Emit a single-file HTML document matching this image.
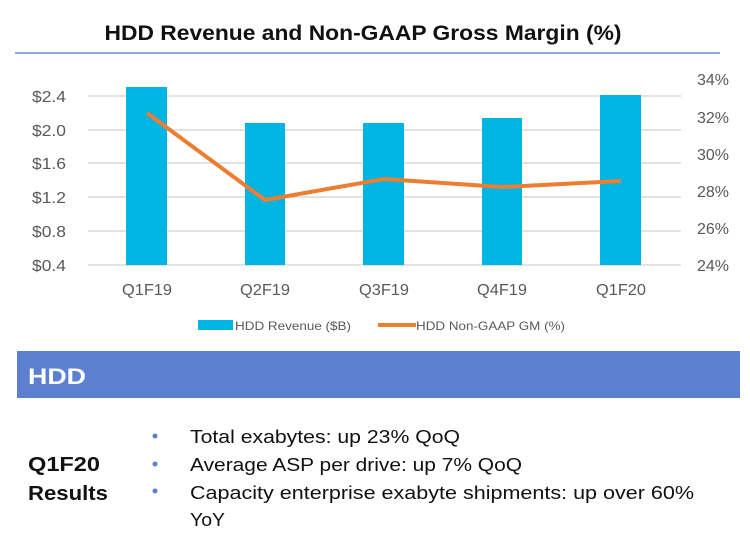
<!DOCTYPE html>
<html><head><meta charset="utf-8"><style>
html,body{margin:0;padding:0;background:#fff;}
svg{display:block;font-family:"Liberation Sans",sans-serif;}
</style></head><body>
<svg width="750" height="533" viewBox="0 0 750 533">
<text x="363" y="40" text-anchor="middle" font-size="21" font-weight="bold" fill="#111" textLength="517" lengthAdjust="spacingAndGlyphs">HDD Revenue and Non-GAAP Gross Margin (%)</text>
<rect x="15" y="52" width="705" height="2" fill="#8fa8dc"/>
<g stroke="#d9d9d9" stroke-width="1.5">
<line x1="88" y1="96" x2="681" y2="96"/><line x1="88" y1="130" x2="681" y2="130"/>
<line x1="88" y1="163" x2="681" y2="163"/><line x1="88" y1="197" x2="681" y2="197"/>
<line x1="88" y1="231" x2="681" y2="231"/><line x1="88" y1="265" x2="681" y2="265"/>
</g>
<g fill="#00b5e2">
<rect x="126" y="87" width="41" height="178"/>
<rect x="245" y="123" width="40" height="142"/>
<rect x="363" y="123" width="41" height="142"/>
<rect x="482" y="118" width="40" height="147"/>
<rect x="600" y="95" width="41" height="170"/>
</g>
<polyline points="147,113 265,200 384,179 502,187 621,181" fill="none" stroke="#ed7d31" stroke-width="4" stroke-linejoin="round"/>
<g font-size="16" fill="#595959">
<text x="32" y="102" textLength="34" lengthAdjust="spacingAndGlyphs">$2.4</text>
<text x="32" y="136" textLength="34" lengthAdjust="spacingAndGlyphs">$2.0</text>
<text x="32" y="169" textLength="34" lengthAdjust="spacingAndGlyphs">$1.6</text>
<text x="32" y="203" textLength="34" lengthAdjust="spacingAndGlyphs">$1.2</text>
<text x="32" y="237" textLength="34" lengthAdjust="spacingAndGlyphs">$0.8</text>
<text x="32" y="271" textLength="34" lengthAdjust="spacingAndGlyphs">$0.4</text>
</g>
<g font-size="16" fill="#595959">
<text x="697" y="85" textLength="32" lengthAdjust="spacingAndGlyphs">34%</text>
<text x="697" y="123" textLength="32" lengthAdjust="spacingAndGlyphs">32%</text>
<text x="697" y="160" textLength="32" lengthAdjust="spacingAndGlyphs">30%</text>
<text x="697" y="197" textLength="32" lengthAdjust="spacingAndGlyphs">28%</text>
<text x="697" y="234" textLength="32" lengthAdjust="spacingAndGlyphs">26%</text>
<text x="697" y="271" textLength="32" lengthAdjust="spacingAndGlyphs">24%</text>
</g>
<g font-size="16" fill="#595959">
<text x="122" y="295" textLength="50" lengthAdjust="spacingAndGlyphs">Q1F19</text>
<text x="240" y="295" textLength="50" lengthAdjust="spacingAndGlyphs">Q2F19</text>
<text x="359" y="295" textLength="50" lengthAdjust="spacingAndGlyphs">Q3F19</text>
<text x="477" y="295" textLength="50" lengthAdjust="spacingAndGlyphs">Q4F19</text>
<text x="596" y="295" textLength="50" lengthAdjust="spacingAndGlyphs">Q1F20</text>
</g>
<rect x="198" y="320" width="35" height="10" fill="#00b5e2"/>
<text x="235" y="330" font-size="12" fill="#595959" textLength="116" lengthAdjust="spacingAndGlyphs">HDD Revenue ($B)</text>
<rect x="378" y="323" width="38" height="4" fill="#ed7d31"/>
<text x="416" y="330" font-size="12" fill="#595959" textLength="149" lengthAdjust="spacingAndGlyphs">HDD Non-GAAP GM (%)</text>
<rect x="17" y="351" width="723" height="47" fill="#5b80cf"/>
<text x="28" y="384" font-size="22" font-weight="bold" fill="#fff" textLength="58" lengthAdjust="spacingAndGlyphs">HDD</text>
<text x="28" y="471" font-size="20" font-weight="bold" fill="#111" textLength="72" lengthAdjust="spacingAndGlyphs">Q1F20</text>
<text x="28" y="500" font-size="20" font-weight="bold" fill="#111" textLength="80" lengthAdjust="spacingAndGlyphs">Results</text>
<g fill="#5b80cf"><circle cx="155" cy="436" r="2.5"/><circle cx="155" cy="464" r="2.5"/><circle cx="155" cy="491" r="2.5"/></g>
<g font-size="18" fill="#111">
<text x="190" y="443" textLength="270" lengthAdjust="spacingAndGlyphs">Total exabytes: up 23% QoQ</text>
<text x="190" y="471" textLength="332" lengthAdjust="spacingAndGlyphs">Average ASP per drive: up 7% QoQ</text>
<text x="190" y="499" textLength="504" lengthAdjust="spacingAndGlyphs">Capacity enterprise exabyte shipments: up over 60%</text>
<text x="190" y="526" textLength="35" lengthAdjust="spacingAndGlyphs">YoY</text>
</g>
</svg>
</body></html>
